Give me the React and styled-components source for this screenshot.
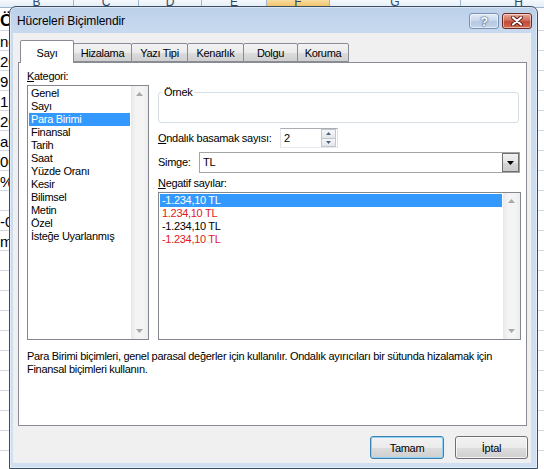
import React from "react";
import styled, { createGlobalStyle } from "styled-components";

const GlobalStyle = createGlobalStyle`
  *, *::before, *::after { box-sizing: border-box; }
  html, body { margin: 0; padding: 0; background: #fff; }
  body { font-family: "Liberation Sans", Arial, sans-serif; overflow: hidden; }
`;

const Screen = styled.div`
  position: relative;
  width: 544px;
  height: 469px;
  overflow: hidden;
  background: #fff;
`;

// ---------- spreadsheet behind the dialog ----------
const Sheet = styled.div`
  display: grid;
  grid-template-columns: 74px 65px 63px 65px 63px 131px 116px;
  grid-template-rows: 8px 23px;
  grid-auto-rows: 20px;
`;

const HeadCell = styled.div`
  display: flex;
  align-items: flex-end;
  justify-content: center;
  overflow: hidden;
  font-size: 12px;
  line-height: 13px;
  color: #2b4a6f;
  border-right: 1px solid #9eb6ce;
  border-bottom: 1px solid #9eb6ce;
  background: ${(p) =>
    p.$active
      ? "linear-gradient(to bottom, #f9dca4, #f1c15f)"
      : "linear-gradient(to bottom, #f6f9fd, #e4ecf7)"};
  span { margin-bottom: -2px; }
`;

const Cell = styled.div`
  display: flex;
  align-items: center;
  overflow: hidden;
  white-space: nowrap;
  padding-top: ${(p) => (p.$title ? 3 : 1)}px;
  font-size: ${(p) => (p.$title ? "17px" : "15px")};
  font-weight: ${(p) => (p.$title ? "bold" : "normal")};
  color: #000;
  border-right: 1px solid #d0d7e5;
  border-bottom: 1px solid #d0d7e5;
`;

// ---------- dialog ----------
const Dialog = styled.div`
  position: absolute;
  left: 9px;
  top: 6px;
  width: 529px;
  height: 463px;
  border: 1px solid #3b4d63;
  border-radius: 7px 7px 0 0;
  background: linear-gradient(to bottom, #bcd0e9 0px, #c8daef 26px, #d0e0f2 100%);
  box-shadow: inset 0 0 0 1px rgba(255, 255, 255, 0.45);
  display: flex;
  flex-direction: column;
  letter-spacing: -0.3px;
`;

const TitleBar = styled.div`
  height: 26px;
  display: flex;
  align-items: flex-start;
  padding: 0 5px 0 7px;
`;

const Title = styled.div`
  flex: 1;
  font-size: 12px;
  line-height: 28px;
  letter-spacing: -0.1px;
  color: #000;
`;

const CaptionButton = styled.div`
  width: 30px;
  height: 16px;
  margin-top: 6px;
  margin-left: 3px;
  border-radius: 3px;
  display: flex;
  align-items: center;
  justify-content: center;
  border: 1px solid ${(p) => (p.$close ? "#6b2a21" : "#7890b4")};
  background: ${(p) =>
    p.$close
      ? "linear-gradient(to bottom, #e9a99a 0%, #d1705d 45%, #c04a36 55%, #d46a52 100%)"
      : "linear-gradient(to bottom, #e3ecf7 0%, #cad9ec 45%, #b6c9e2 55%, #c5d6ec 100%)"};
  box-shadow: inset 0 0 0 1px rgba(255, 255, 255, 0.5);
  font-size: 13px;
  font-weight: bold;
  color: #fff;
  text-shadow: 0 0 1px #41618b, 0 0 1px #41618b, 0 0 2px #41618b;
`;

const Body = styled.div`
  flex: 1;
  margin: 0 6px 5px 3px;
  padding: 7px 4px 0 5px;
  background: #f0f0f0;
  display: flex;
  flex-direction: column;
`;

const TabRow = styled.div`
  height: 22px;
  display: flex;
  align-items: flex-end;
  padding-left: 2px;
  position: relative;
  z-index: 1;
`;

const Tab = styled.div`
  width: ${(p) => p.$w}px;
  height: ${(p) => (p.$selected ? 23 : 19)}px;
  margin-left: ${(p) => (p.$first ? 0 : -1)}px;
  margin-bottom: ${(p) => (p.$selected ? -1 : 0)}px;
  border: 1px solid #898c95;
  border-bottom: ${(p) => (p.$selected ? "none" : "1px solid #898c95")};
  border-radius: 2px 2px 0 0;
  background: ${(p) =>
    p.$selected ? "#fff" : "linear-gradient(to bottom, #f3f3f3 0%, #ebebeb 50%, #dddddd 51%, #cfcfcf 100%)"};
  display: flex;
  align-items: center;
  justify-content: center;
  padding-top: ${(p) => (p.$selected ? 1 : 0)}px;
  font-size: 11px;
  color: #000;
  position: relative;
  z-index: ${(p) => (p.$selected ? 2 : 1)};
`;

const Panel = styled.div`
  height: 364px;
  border: 1px solid #898c95;
  background: #fff;
  padding: 7px 5px 0 8px;
`;

const Columns = styled.div`
  display: flex;
  gap: 9px;
`;

const LeftCol = styled.div`
  width: 122px;
  display: flex;
  flex-direction: column;
`;

const RightCol = styled.div`
  flex: 1;
  display: flex;
  flex-direction: column;
`;

const Label = styled.div`
  font-size: 11px;
  line-height: 13px;
  color: #000;
  width: ${(p) => (p.$w ? `${p.$w}px` : "auto")};
  flex-shrink: 0;
  margin-top: ${(p) => p.$mt || 0}px;
  white-space: nowrap;
  u { text-decoration: underline; }
`;

const ListBox = styled.div`
  height: ${(p) => p.$h}px;
  margin-top: 2px;
  border: 1px solid #828790;
  background: #fff;
  display: flex;
`;

const Items = styled.div`
  flex: 1;
  padding: 1px;
`;

const Item = styled.div`
  height: 13px;
  line-height: 13px;
  padding-left: 2px;
  font-size: 11px;
  white-space: nowrap;
  color: ${(p) => (p.$selected ? "#fff" : p.$red ? "#e2171f" : "#000")};
  background: ${(p) => (p.$selected ? "#3399ff" : "transparent")};
`;

const ScrollBar = styled.div`
  width: 17px;
  background: linear-gradient(to right, #e8e8e8, #f4f4f4 30%, #f4f4f4 70%, #ececec);
  display: flex;
  flex-direction: column;
  justify-content: space-between;
  align-items: center;
  padding: 6px 0 6px;
`;

const GroupBox = styled.fieldset`
  margin: 16px 2px 0 0;
  padding: 0;
  min-width: 0;
  height: 37px;
  border: 1px solid #d5dfe5;
  border-radius: 3px;
  legend {
    margin-left: 3px;
    padding: 0 2px;
    font-size: 11px;
    line-height: 13px;
    color: #000;
  }
`;

const FieldRow = styled.div`
  display: flex;
  align-items: center;
  height: ${(p) => p.$h}px;
  margin-top: ${(p) => p.$mt}px;
`;

const SpinBox = styled.div`
  width: 58px;
  height: 20px;
  border: 1px solid #abadb3;
  border-color: #abadb3 #dbdfe6 #e3e9ef #e2e3ea;
  background: #fff;
  display: flex;
  align-items: stretch;
`;

const SpinValue = styled.div`
  flex: 1;
  padding-left: 3px;
  font-size: 11px;
  line-height: 18px;
`;

const SpinButtons = styled.div`
  width: 15px;
  margin: 0 1px 0 0;
  display: flex;
  flex-direction: column;
`;

const SpinButton = styled.div`
  flex: 1;
  border: 1px solid #c0c5cf;
  margin-top: ${(p) => (p.$down ? -1 : 0)}px;
  background: linear-gradient(to bottom, #f6f7f9, #e3e6ea);
  display: flex;
  align-items: center;
  justify-content: center;
`;

const Combo = styled.div`
  flex: 1;
  height: 21px;
  margin-right: 1px;
  border: 1px solid #a5a5a5;
  background: #fff;
  display: flex;
  align-items: stretch;
`;

const ComboValue = styled.div`
  flex: 1;
  padding-left: 3px;
  font-size: 11px;
  line-height: 19px;
`;

const DropButton = styled.div`
  width: 17px;
  border: 1px solid #707070;
  background: linear-gradient(to bottom, #f2f2f2 0%, #e4e4e4 50%, #d6d6d6 51%, #cbcbcb 100%);
  display: flex;
  align-items: center;
  justify-content: center;
`;

const Description = styled.div`
  margin-top: 10px;
  font-size: 11px;
  line-height: 13px;
  white-space: nowrap;
  color: #000;
`;

const Footer = styled.div`
  display: flex;
  justify-content: flex-end;
  gap: 11px;
  padding-top: 10px;
  margin-right: -1px;
`;

const Button = styled.div`
  width: ${(p) => p.$w}px;
  height: 23px;
  border: 1px solid ${(p) => (p.$default ? "#3c7fb1" : "#707070")};
  border-radius: 3px;
  background: linear-gradient(to bottom, #f2f2f2 0%, #ebebeb 50%, #dddddd 51%, #cfcfcf 100%);
  box-shadow: ${(p) =>
    p.$default ? "inset 0 0 0 1px #8fd4f5" : "inset 0 0 0 1px rgba(255,255,255,0.7)"};
  display: flex;
  align-items: center;
  justify-content: center;
  font-size: 11px;
  color: #000;
`;

const Tri = ({ down, color = "#000", w = 7, h = 4 }) => (
  <svg width={w} height={h} viewBox={`0 0 ${w} ${h}`}>
    <path
      d={down ? `M0 0 L${w} 0 L${w / 2} ${h} Z` : `M0 ${h} L${w} ${h} L${w / 2} 0 Z`}
      fill={color}
    />
  </svg>
);

const CloseGlyph = () => (
  <svg width="14" height="10" viewBox="0 0 14 10">
    <path d="M3 1.5 L11 8.5 M11 1.5 L3 8.5" stroke="#5a1d14" strokeWidth="4" strokeLinecap="round" />
    <path d="M3 1.5 L11 8.5 M11 1.5 L3 8.5" stroke="#fff" strokeWidth="2.2" strokeLinecap="round" />
  </svg>
);

const columns = ["B", "C", "D", "E", "F", "G", "H"];
const leftCells = ["Ö", "ne", "20", "9,0", "1", "20", "ar", "00", "%", "", "-0", "me"];
const rowCount = 23;

const tabs = [
  { label: "Sayı", w: 54 },
  { label: "Hizalama", w: 59 },
  { label: "Yazı Tipi", w: 57 },
  { label: "Kenarlık", w: 57 },
  { label: "Dolgu", w: 55 },
  { label: "Koruma", w: 52 },
];

const categories = [
  "Genel",
  "Sayı",
  "Para Birimi",
  "Finansal",
  "Tarih",
  "Saat",
  "Yüzde Oranı",
  "Kesir",
  "Bilimsel",
  "Metin",
  "Özel",
  "İsteğe Uyarlanmış",
];

const negatives = [
  { text: "-1.234,10 TL", red: false },
  { text: "1.234,10 TL", red: true },
  { text: "-1.234,10 TL", red: false },
  { text: "-1.234,10 TL", red: true },
];

const Scroll = () => (
  <ScrollBar>
    <Tri color="#a8a8a8" />
    <Tri down color="#a8a8a8" />
  </ScrollBar>
);

export default function App() {
  return (
    <Screen>
      <GlobalStyle />
      <Sheet>
        {columns.map((c) => (
          <HeadCell key={c} $active={c === "F"}>
            <span>{c}</span>
          </HeadCell>
        ))}
        {Array.from({ length: rowCount }).map((_, r) =>
          columns.map((c, i) => (
            <Cell key={`${r}-${c}`} $title={r === 0 && i === 0}>
              {i === 0 ? leftCells[r] || "" : ""}
            </Cell>
          ))
        )}
      </Sheet>

      <Dialog>
        <TitleBar>
          <Title>Hücreleri Biçimlendir</Title>
          <CaptionButton>?</CaptionButton>
          <CaptionButton $close>
            <CloseGlyph />
          </CaptionButton>
        </TitleBar>

        <Body>
          <TabRow>
            {tabs.map((t, i) => (
              <Tab key={t.label} $w={t.w} $first={i === 0} $selected={i === 0}>
                {t.label}
              </Tab>
            ))}
          </TabRow>

          <Panel>
            <Columns>
              <LeftCol>
                <Label>
                  <u>K</u>ategori:
                </Label>
                <ListBox $h={255}>
                  <Items>
                    {categories.map((c) => (
                      <Item key={c} $selected={c === "Para Birimi"}>
                        {c}
                      </Item>
                    ))}
                  </Items>
                  <Scroll />
                </ListBox>
              </LeftCol>

              <RightCol>
                <GroupBox>
                  <legend>Örnek</legend>
                </GroupBox>

                <FieldRow $h={20} $mt={5}>
                  <Label $w={122}>
                    <u>O</u>ndalık basamak sayısı:
                  </Label>
                  <SpinBox>
                    <SpinValue>2</SpinValue>
                    <SpinButtons>
                      <SpinButton>
                        <Tri w={5} h={3} color="#4d6185" />
                      </SpinButton>
                      <SpinButton $down>
                        <Tri down w={5} h={3} color="#4d6185" />
                      </SpinButton>
                    </SpinButtons>
                  </SpinBox>
                </FieldRow>

                <FieldRow $h={21} $mt={4}>
                  <Label $w={41}>
                    Sim<u>g</u>e:
                  </Label>
                  <Combo>
                    <ComboValue>TL</ComboValue>
                    <DropButton>
                      <Tri down w={7} h={4} />
                    </DropButton>
                  </Combo>
                </FieldRow>

                <Label $mt={4}>
                  <u>N</u>egatif sayılar:
                </Label>
                <ListBox $h={148}>
                  <Items>
                    {negatives.map((n, i) => (
                      <Item key={i} $red={n.red} $selected={i === 0}>
                        {n.text}
                      </Item>
                    ))}
                  </Items>
                  <Scroll />
                </ListBox>
              </RightCol>
            </Columns>

            <Description>
              Para Birimi biçimleri, genel parasal değerler için kullanılır. Ondalık ayırıcıları bir sütunda hizalamak için
              <br />
              Finansal biçimleri kullanın.
            </Description>
          </Panel>

          <Footer>
            <Button $w={74} $default>
              Tamam
            </Button>
            <Button $w={73}>İptal</Button>
          </Footer>
        </Body>
      </Dialog>
    </Screen>
  );
}
